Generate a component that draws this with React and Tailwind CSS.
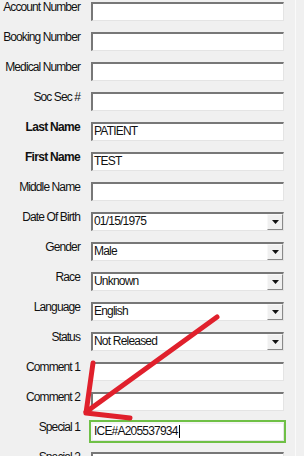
import React from 'react';

const rows = [
  { label: 'Account Number' },
  { label: 'Booking Number' },
  { label: 'Medical Number' },
  { label: 'Soc Sec #' },
  { label: 'Last Name', value: 'PATIENT', bold: true },
  { label: 'First Name', value: 'TEST', bold: true },
  { label: 'Middle Name' },
  { label: 'Date Of Birth', value: '01/15/1975', select: true },
  { label: 'Gender', value: 'Male', select: true },
  { label: 'Race', value: 'Unknown', select: true },
  { label: 'Language', value: 'English', select: true },
  { label: 'Status', value: 'Not Released', select: true },
  { label: 'Comment 1' },
  { label: 'Comment 2' },
  { label: 'Special 1', value: 'ICE#A205537934', focused: true },
  { label: 'Special 2' },
];

function DropButton() {
  return (
    <div className="absolute right-0 top-0 bottom-0 w-[16px] bg-[#f0f0f0] border-t border-l border-[#f8f8f8] border-r border-b border-r-[#8a8a8a] border-b-[#8a8a8a] flex items-center justify-center">
      <svg width="7" height="4" viewBox="0 0 7 4">
        <path d="M0 0 H7 L3.5 4 Z" fill="#111" />
      </svg>
    </div>
  );
}

function Row({ label, value, bold, select, focused }) {
  return (
    <div className="flex items-start h-[30px] shrink-0">
      <div
        className={`w-[80px] text-right text-[12px] leading-[14px] text-[#111] whitespace-nowrap ${bold ? 'font-bold tracking-[-0.7px]' : 'tracking-[-0.9px]'}`}
      >
        {label}
      </div>
      <div
        className={`relative ml-[11px] mt-[2px] w-[193px] h-[19px] bg-white border-t-2 border-l-2 border-[#777] border-r border-b border-r-[#e4e4e4] border-b-[#e4e4e4] ${focused ? 'outline-2 outline-[#6fc046] border-[#f4f4f4]' : ''}`}
      >
        {value && (
          <div className="pl-[1px] text-[12px] leading-[15px] tracking-[-0.8px] text-[#111] whitespace-nowrap flex items-center">
            {value}
            {focused && <span className="inline-block w-px h-[13px] bg-black ml-[1px]" />}
          </div>
        )}
        {select && <DropButton />}
      </div>
    </div>
  );
}

export default function App() {
  return (
    <div className="relative w-[304px] h-[456px] overflow-hidden bg-[#f0f0f0] font-['Liberation_Sans',Arial,sans-serif]">
      <div className="flex flex-col w-[296px] h-full border-r border-[#fafafa]">
        {rows.map((r) => (
          <Row key={r.label} {...r} />
        ))}
      </div>
      <svg className="absolute inset-0 pointer-events-none" width="304" height="456" viewBox="0 0 304 456">
        <g stroke="#e0202c" strokeWidth="5" strokeLinecap="round" strokeLinejoin="round" fill="none">
          <path d="M217 317 L86 412" />
          <path d="M93 363 L86 413 L130 418" />
        </g>
      </svg>
    </div>
  );
}
